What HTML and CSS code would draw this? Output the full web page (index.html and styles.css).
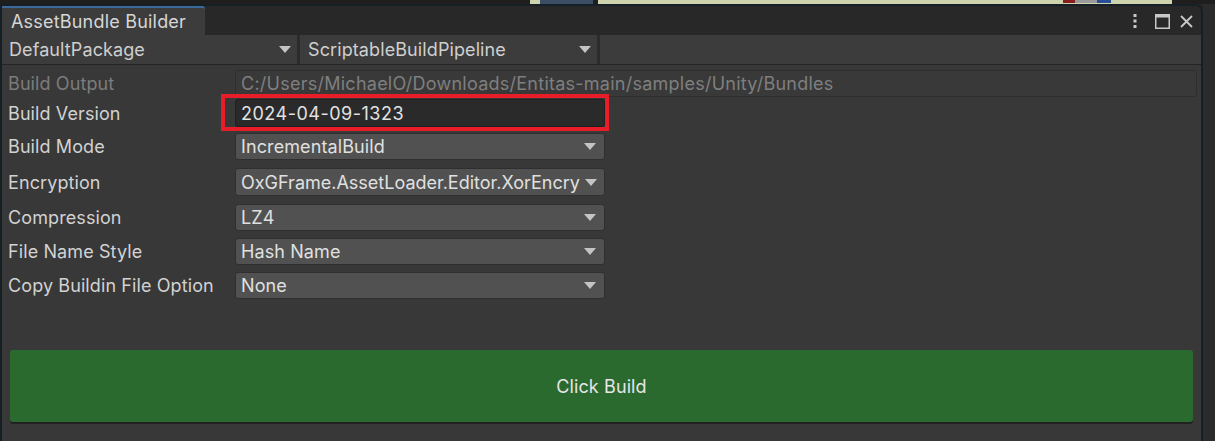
FILE: index.html
```html
<!DOCTYPE html>
<html>
<head>
<meta charset="utf-8">
<link rel="stylesheet" href="styles.css">
</head>
<body>
<div class="desktop">
  <div class="backdrop">
    <div class="bd-dark bd-a"></div>
    <div class="bd-light bd-b"></div>
    <div class="bd-blue bd-c"></div>
    <div class="bd-dark bd-d"></div>
    <div class="bd-light bd-e">
      <span class="chip chip-red"></span>
      <span class="chip chip-grey"></span>
      <span class="chip chip-blue"></span>
    </div>
    <div class="bd-dark bd-f"></div>
  </div>
  <div class="main">
    <div class="window">
      <div class="titlebar">
        <div class="tab">AssetBundle Builder</div>
        <div class="title-fill"></div>
        <div class="win-icons">
          <svg class="ic" width="4" height="16" viewBox="0 0 4 16"><rect x="0.5" y="1" width="3" height="3" fill="#c8c8c8"/><rect x="0.5" y="6.5" width="3" height="3" fill="#c8c8c8"/><rect x="0.5" y="12" width="3" height="3" fill="#c8c8c8"/></svg>
          <svg class="ic ic-max" width="15" height="15" viewBox="0 0 15 15"><rect x="0.75" y="0.75" width="13.5" height="13.5" fill="none" stroke="#c8c8c8" stroke-width="1.5"/><rect x="0" y="0" width="15" height="3.5" fill="#c8c8c8"/></svg>
          <svg class="ic" width="13" height="13" viewBox="0 0 13 13"><path d="M1 1 L12 12 M12 1 L1 12" stroke="#c8c8c8" stroke-width="1.8"/></svg>
        </div>
      </div>
      <div class="toolbar">
        <div class="tb-drop tb-first"><span>DefaultPackage</span><span class="arrow"></span></div>
        <div class="tb-drop"><span>ScriptableBuildPipeline</span><span class="arrow"></span></div>
        <div class="tb-fill"></div>
      </div>
      <div class="content">
        <div class="row row-first">
          <div class="label disabled">Build Output</div>
          <div class="field field-disabled">C:/Users/MichaelO/Downloads/Entitas-main/samples/Unity/Bundles</div>
        </div>
        <div class="row row-version">
          <div class="label">Build Version</div>
          <div class="field field-text short">2024-04-09-1323<span class="highlight"></span></div>
        </div>
        <div class="row row-mode">
          <div class="label">Build Mode</div>
          <div class="field drop short"><span>IncrementalBuild</span><span class="arrow"></span></div>
        </div>
        <div class="row row-enc">
          <div class="label">Encryption</div>
          <div class="field drop short drop-tight"><span class="enc-text">OxGFrame.AssetLoader.Editor.XorEncry</span><span class="arrow"></span></div>
        </div>
        <div class="row row-g8">
          <div class="label">Compression</div>
          <div class="field drop short"><span>LZ4</span><span class="arrow"></span></div>
        </div>
        <div class="row row-g7">
          <div class="label">File Name Style</div>
          <div class="field drop short"><span>Hash Name</span><span class="arrow"></span></div>
        </div>
        <div class="row row-g7">
          <div class="label">Copy Buildin File Option</div>
          <div class="field drop short"><span>None</span><span class="arrow"></span></div>
        </div>
        <button class="build-btn">Click Build</button>
      </div>
    </div>
    <div class="outside"></div>
  </div>
</div>
</body>
</html>
```
FILE: styles.css
```css
* { box-sizing: border-box; }
html, body { margin: 0; padding: 0; }
body {
  width: 1215px;
  height: 441px;
  overflow: hidden;
  background: #262626;
  font-family: Inter, "Noto Sans", sans-serif;
  font-size: 18px;
  letter-spacing: 0.1px;
  color: #d2d2d2;
}
.desktop { display: flex; flex-direction: column; height: 441px; }
.backdrop { display: flex; height: 4px; flex: none; }
.bd-dark { background: #1e1e1e; }
.bd-light { background: #cdd4ad; }
.bd-blue { background: #3c4e66; }
.bd-a { width: 530px; }
.bd-b { width: 10px; }
.bd-c { width: 53px; }
.bd-d { width: 5px; }
.bd-e { width: 574px; display: flex; align-items: flex-start; padding-left: 450px; }
.bd-f { flex: 1; }
.chip { display: block; height: 3px; }
.chip-red { width: 12px; background: #8a1e1e; margin-left: 15px; }
.chip-grey { width: 22px; background: #9a9a9a; }
.chip-blue { width: 14px; background: #2a4f9a; }

.main { display: flex; flex: 1; min-height: 0; }
.window {
  width: 1203px;
  display: flex;
  flex-direction: column;
  border: 2px solid #162024;
  border-bottom: none;
  border-top-right-radius: 8px;
  background: #383838;
  overflow: hidden;
}
.outside { flex: 1; background: #2b2b2b; }

.titlebar { display: flex; height: 29px; background: #282828; flex: none; }
.tab {
  width: 203px;
  background: #3c3c3c;
  border-top: 2px solid #3b6a9a;
  border-top-right-radius: 3px;
  padding: 2px 0 0 9px;
  font-size: 18px;
  letter-spacing: 0.2px;
  color: #d6d6d6;
  line-height: 24px;
}
.title-fill { flex: 1; }
.win-icons { display: flex; align-items: center; padding-right: 8px; padding-top: 1px; }
.ic { display: block; }
.ic-max { margin-left: 18px; margin-right: 10px; }

.toolbar {
  display: flex;
  height: 30px;
  background: #3c3c3c;
  border-bottom: 1px solid #242424;
  flex: none;
}
.tb-drop {
  width: 300px;
  display: flex;
  align-items: center;
  justify-content: space-between;
  padding: 0 6px 0 8px;
  border-right: 3px solid #2c2c2c;
  color: #cfcfcf;
}
.tb-first { width: 298px; padding-left: 7px; }
.tb-fill { flex: 1; }

.arrow {
  width: 0;
  height: 0;
  border-left: 6px solid transparent;
  border-right: 6px solid transparent;
  border-top: 7px solid #c4c4c4;
  flex: none;
}

.content { display: flex; flex-direction: column; padding: 5px 4px 0 6px; flex: 1; }
.row { display: flex; align-items: center; height: 27px; }
.row-version { margin-top: 2px; height: 28px; }
.row-mode { margin-top: 6px; }
.row-enc { margin-top: 8px; height: 28px; }
.row-g8 { margin-top: 8px; }
.row-g7 { margin-top: 7px; }
.label { width: 227px; flex: none; color: #d2d2d2; white-space: nowrap; }
.label.disabled { color: #7c7c7c; }
.field {
  height: 100%;
  display: flex;
  align-items: center;
  border-radius: 3px;
  padding: 0 5px;
  white-space: nowrap;
  position: relative;
}
.field-disabled {
  flex: 1;
  background: #393939;
  border: 1px solid #2e2e2e;
  color: #7f7f7f;
  letter-spacing: 0.25px;
}
.short { width: 370px; flex: none; }
.field-text {
  background: #2a2a2a;
  border: 1px solid #1f1f1f;
  color: #e2e2e2;
  letter-spacing: 0.5px;
}
.drop {
  background: #515151;
  border: 1px solid #2f2f2f;
  justify-content: space-between;
  padding-right: 8px;
  color: #e0e0e0;
}
.drop-tight { padding-right: 7px; }
.enc-text { letter-spacing: 0; }
.highlight {
  position: absolute;
  left: -15px;
  right: -5px;
  top: -6px;
  bottom: -5px;
  border: 4px solid #e81d27;
  pointer-events: none;
}
.build-btn {
  margin: 51px 4px 0 2px;
  height: 72px;
  background: #2a6a2e;
  border: none;
  border-radius: 3px;
  box-shadow: 0 2px 0 #222;
  color: #e6e6e6;
  font-family: Inter, "Noto Sans", sans-serif;
  font-size: 18px;
  letter-spacing: 0.1px;
}
```
